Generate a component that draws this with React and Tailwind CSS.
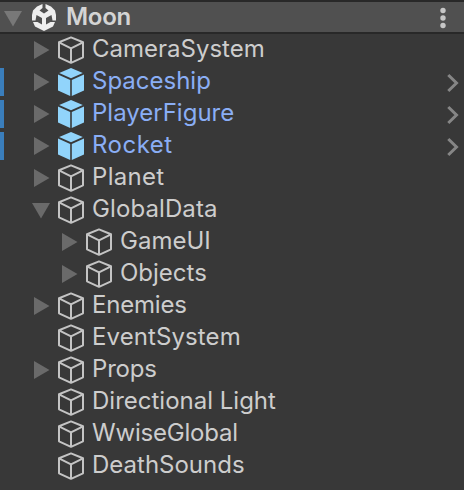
const rows = [
  { name: 'CameraSystem', arrow: 'right' },
  { name: 'Spaceship', arrow: 'right', prefab: true },
  { name: 'PlayerFigure', arrow: 'right', prefab: true },
  { name: 'Rocket', arrow: 'right', prefab: true, tracking: 'tracking-[0.5px]' },
  { name: 'Planet', arrow: 'right', tracking: 'tracking-[0.3px]' },
  { name: 'GlobalData', arrow: 'down', tracking: 'tracking-[0.1px]' },
  { name: 'GameUI', arrow: 'right', child: true },
  { name: 'Objects', arrow: 'right', child: true },
  { name: 'Enemies', arrow: 'right', tracking: 'tracking-[-0.2px]' },
  { name: 'EventSystem', tracking: 'tracking-[0.1px]' },
  { name: 'Props', arrow: 'right', tracking: 'tracking-[-0.2px]' },
  { name: 'Directional Light' },
  { name: 'WwiseGlobal', tracking: 'tracking-[-0.2px]' },
  { name: 'DeathSounds' },
];

function Arrow({ dir }) {
  return (
    <svg className="h-8 w-6 shrink-0" viewBox="0 0 24 32" fill="#6a6a6a">
      {dir === 'right' && <path d="M4 7v18l15.500-9z" />}
      {dir === 'down' && <path d="M2 9h18L11 24.500z" />}
    </svg>
  );
}

function Cube({ prefab }) {
  return prefab ? (
    <svg className="h-8 w-7 shrink-0" viewBox="0 0 28 32" fill="#91d4fb">
      <path d="M14 2 25.800 7 14 12.300 2.200 7z" />
      <path d="M1 8.400 13.200 14V30L1 24.600zM27 8.400 14.800 14V30L27 24.600z" />
    </svg>
  ) : (
    <svg className="h-8 w-7 shrink-0" viewBox="0 0 28 32" fill="none" stroke="#c4c4c4" strokeWidth="2" strokeLinejoin="round">
      <path d="M14 3.400 26 8.300v15L14 28.800 2 23.300v-15zM2 8.300l12 6 12-6M14 14.300v14.500" />
    </svg>
  );
}

function SceneLogo() {
  return (
    <svg className="h-[30px] w-7 shrink-0" viewBox="0 0 28 30" fill="#eeeeee">
      <path d="M12.500 2v4L9.500 8.500l4.500 3 4.500-3-3-2.500V2L21 4.500l4 4 1 4.500v5.500h-3.500L21.500 13 16 16v6.500l4.500-2.500H25l-2 4.500-9 4.500-9-4.500L3 20h4.500l4.500 2.500V16l-5.500-3-1 5.500H2V13l1-4.500 4-4z" />
    </svg>
  );
}

function Row({ row }) {
  return (
    <div className="flex h-8 items-center">
      <div className={row.prefab ? 'h-7 w-1 bg-[#3a7ebc]' : 'h-7 w-1'} />
      <div className={row.child ? 'ml-[54px] flex' : 'ml-[26px] flex'}>
        <Arrow dir={row.arrow} />
        <div className="ml-[3px] flex">
          <Cube prefab={row.prefab} />
        </div>
      </div>
      <span
        className={`ml-[7px] -mt-[3px] whitespace-nowrap leading-8 ${row.tracking ?? ''} ${row.prefab ? 'text-[#8aaef5]' : 'text-[#cdcdcd]'}`}
      >
        {row.name}
      </span>
      {row.prefab && (
        <svg className="ml-auto h-8 w-6" viewBox="0 0 24 32" fill="none" stroke="#868686" strokeWidth="3">
          <path d="M8.300 9 16.500 17 8.300 25" />
        </svg>
      )}
    </div>
  );
}

export default function App() {
  return (
    <div className="h-[490px] w-[464px] overflow-hidden bg-[#383838] font-['Inter',sans-serif] text-[24px]">
      <header className="flex h-[34px] items-center border-y-2 border-[#282828] bg-[#505050]">
        <svg className="h-[30px] w-[30px] shrink-0" viewBox="0 0 30 30" fill="#787878">
          <path d="M4 9h18l-9 15.500z" />
        </svg>
        <SceneLogo />
        <span className="-mt-px ml-2 font-semibold leading-[30px] tracking-[-0.3px] text-[#d4d4d4]">Moon</span>
        <svg className="ml-auto mr-[13px] h-[30px] w-4" viewBox="0 0 16 30" fill="#c6c6c6">
          <circle cx="8" cy="8.500" r="2.700" />
          <circle cx="8" cy="16" r="2.700" />
          <circle cx="8" cy="23.500" r="2.700" />
        </svg>
      </header>
      <main>
        {rows.map((row) => (
          <Row key={row.name} row={row} />
        ))}
      </main>
    </div>
  );
}
